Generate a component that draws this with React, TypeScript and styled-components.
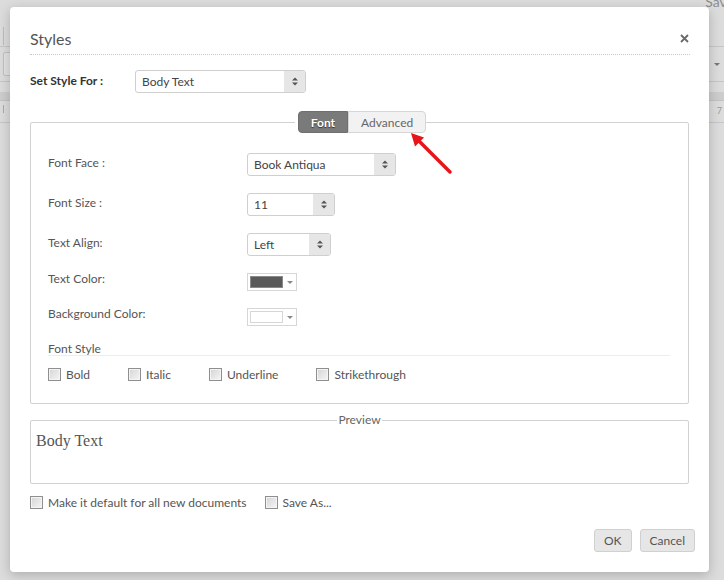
import styled, { createGlobalStyle } from "styled-components";

const GlobalStyle = createGlobalStyle`
  html, body {
    margin: 0;
    padding: 0;
  }
  body {
    font-family: Lato, "Liberation Sans", sans-serif;
    background: #dcdcdc;
  }
`;

const Screen = styled.div`
  position: relative;
  width: 724px;
  height: 580px;
  overflow: hidden;
  background: #dcdcdc;
`;

/* the editor behind the modal */
const AppShell = styled.div`
  display: flex;
  flex-direction: column;
`;

const AppHeader = styled.div`
  height: 47px;
  box-sizing: border-box;
  border-bottom: 1px solid #c6c6c6;
  display: flex;
  justify-content: space-between;
  align-items: flex-start;
  padding-left: 3px;
`;

const HeaderTool = styled.div`
  margin-top: 27px;
  width: 30px;
  height: 18px;
  border-left: 1px solid #bdbdbd;
`;

const SaveText = styled.span`
  margin-top: -7px;
  margin-right: -10px;
  font-size: 14px;
  color: #8c8c8c;
`;

const Toolbar = styled.div`
  height: 35px;
  box-sizing: border-box;
  border-bottom: 1px solid #c6c6c6;
  display: flex;
  align-items: center;
  justify-content: space-between;
  padding: 0 3px;
`;

const ToolBox = styled.div`
  width: 40px;
  height: 22px;
  border: 1px solid #c2c2c2;
  border-radius: 2px;
  background: #e2e2e2;
`;

const ToolRight = styled.div`
  display: flex;
  align-items: center;
  gap: 6px;
  padding-right: 1px;
  &::before {
    content: "";
    width: 1px;
    height: 17px;
    background: #bdbdbd;
  }
  &::after {
    content: "";
    border-left: 3px solid transparent;
    border-right: 3px solid transparent;
    border-top: 3px solid #777;
  }
`;

const Band = styled.div`
  margin-top: 10px;
  height: 8px;
  background: #cdcdcd;
  border-bottom: 1px solid #c2c2c2;
`;

const Ruler = styled.div`
  height: 22px;
  border-bottom: 1px solid #c6c6c6;
  display: flex;
  justify-content: space-between;
  padding: 4px 2px 0 3px;
  box-sizing: border-box;
  font-size: 9px;
  color: #999;
  &::before {
    content: "";
    width: 1px;
    height: 8px;
    background: #aaa;
  }
`;

/* modal */
const Dialog = styled.div`
  position: absolute;
  left: 10px;
  top: 7px;
  width: 699px;
  height: 565px;
  box-sizing: border-box;
  padding: 0 19px 0 20px;
  background: #fff;
  border-radius: 4px;
  box-shadow: 0 3px 12px rgba(0, 0, 0, 0.22);
  display: flex;
  flex-direction: column;
  color: #555;
  font-size: 12px;
`;

const Header = styled.div`
  display: flex;
  align-items: center;
  justify-content: space-between;
  padding: 22px 0 6px;
  border-bottom: 1px dotted #c8c8c8;
`;

const Title = styled.h1`
  margin: 0;
  font-size: 16px;
  line-height: 19px;
  font-weight: 400;
  color: #555;
`;

const CloseButton = styled.button`
  border: 0;
  background: none;
  padding: 0;
  margin-right: 1px;
  width: 9px;
  height: 9px;
  display: flex;
  cursor: pointer;
`;

const StyleForRow = styled.div`
  margin-top: 15px;
  display: flex;
  align-items: center;
`;

const StyleForLabel = styled.label`
  width: 105px;
  font-weight: 700;
  color: #333;
  margin-top: -2px;
`;

const SelectBox = styled.div<{ $w: number }>`
  width: ${(p) => p.$w}px;
  height: 23px;
  box-sizing: border-box;
  border: 1px solid #cfcfcf;
  border-radius: 3px;
  display: flex;
  align-items: stretch;
  overflow: hidden;
  background: #fff;
`;

const SelectValue = styled.span`
  flex: 1;
  display: flex;
  align-items: center;
  padding-left: 6px;
  color: #444;
`;

const SelectArrows = styled.span`
  width: 21px;
  background: #e6e6e6;
  display: flex;
  align-items: center;
  justify-content: center;
`;

const Group = styled.fieldset`
  margin: 18px 1px 0 0;
  padding: 0 18px 21px 17px;
  min-width: 0;
  border: 1px solid #d2d2d2;
  border-radius: 2px;
`;

const TabLegend = styled.legend`
  margin: 0 auto;
  padding: 0;
  display: flex;
  transform: translateX(3px);
`;

const Tab = styled.button<{ $active?: boolean }>`
  height: 22px;
  box-sizing: border-box;
  font-family: inherit;
  font-size: 12px;
  padding: 0 12px;
  border: 1px solid ${(p) => (p.$active ? "#6f6f6f" : "#d6d6d6")};
  background: ${(p) => (p.$active ? "#7a7a7a" : "#f2f2f2")};
  color: ${(p) => (p.$active ? "#fff" : "#666")};
  font-weight: ${(p) => (p.$active ? 700 : 400)};
  text-shadow: ${(p) => (p.$active ? "0 1px 1px #333" : "none")};
  border-radius: ${(p) => (p.$active ? "4px 0 0 4px" : "0 4px 4px 0")};
  cursor: pointer;
`;

const FormGrid = styled.div`
  margin-top: 20px;
  display: grid;
  grid-template-columns: 199px auto;
  row-gap: 17px;
  align-items: start;
`;

const FieldLabel = styled.label<{ $offset: number }>`
  color: #555;
  line-height: 15px;
  margin-top: ${(p) => p.$offset}px;
`;

const ColorPicker = styled.div`
  width: 50px;
  height: 18px;
  box-sizing: border-box;
  border: 1px solid #d6d6d6;
  display: flex;
  align-items: center;
  padding: 0 0 0 2px;
  gap: 3px;
`;

const Swatch = styled.span<{ $color: string }>`
  width: 33px;
  height: 12px;
  box-sizing: border-box;
  background: ${(p) => p.$color};
  border: 1px solid ${(p) => (p.$color === "#fff" ? "#d6d6d6" : "#8a8a8a")};
`;

const Caret = styled.span`
  border-left: 3px solid transparent;
  border-right: 3px solid transparent;
  border-top: 3px solid #8a8a8a;
  margin-left: 1px;
`;

const SectionTitle = styled.div`
  margin-top: 16px;
  line-height: 13px;
  border-bottom: 1px solid #ededed;
  color: #555;
`;

const CheckRow = styled.div<{ $gap: number }>`
  display: flex;
  align-items: center;
  gap: ${(p) => p.$gap}px;
`;

const StyleChecks = styled(CheckRow)`
  margin-top: 11px;
`;

const CheckItem = styled.label`
  display: flex;
  align-items: center;
  gap: 5px;
  color: #555;
  cursor: pointer;
`;

const CheckBox = styled.span`
  width: 13px;
  height: 13px;
  box-sizing: border-box;
  border: 1px solid #8f8f8f;
  background: linear-gradient(135deg, #d4d4d4, #f6f6f6);
  box-shadow: inset 0 0 0 1px #f4f4f4;
`;

const PreviewGroup = styled.fieldset`
  margin: 9px 1px 0 0;
  padding: 5px 5px 0;
  min-width: 0;
  height: 71px;
  box-sizing: border-box;
  border: 1px solid #d2d2d2;
  border-radius: 2px;
`;

const PreviewLegend = styled.legend`
  margin: 0 auto;
  padding: 0 1px;
  font-size: 12px;
  line-height: 14px;
  color: #666;
`;

const PreviewText = styled.div`
  font-family: "Liberation Serif", "DejaVu Serif", serif;
  font-size: 16px;
  color: #555;
`;

const OptionsRow = styled(CheckRow)`
  margin-top: 11px;
`;

const ButtonRow = styled.div`
  margin-top: 19px;
  margin-right: -5px;
  display: flex;
  justify-content: flex-end;
  gap: 8px;
`;

const Button = styled.button`
  height: 23px;
  box-sizing: border-box;
  padding: 0 9px;
  font-family: inherit;
  font-size: 12px;
  color: #555;
  background: #e6e6e6;
  border: 1px solid #d0d0d0;
  border-radius: 3px;
  cursor: pointer;
`;

const Pointer = styled.svg`
  position: absolute;
  left: 400px;
  top: 125px;
`;

const UpDown = () => (
  <svg width="6" height="9" viewBox="0 0 6 9">
    <path d="M0 3.5 L3 0.5 L6 3.5 Z M0 5.5 L3 8.5 L6 5.5 Z" fill="#555" />
  </svg>
);

const Select = ({ value, width }: { value: string; width: number }) => (
  <SelectBox $w={width}>
    <SelectValue>{value}</SelectValue>
    <SelectArrows>
      <UpDown />
    </SelectArrows>
  </SelectBox>
);

const Check = ({ label }: { label: string }) => (
  <CheckItem>
    <CheckBox />
    {label}
  </CheckItem>
);

const fields = [
  { label: "Font Face :", value: "Book Antiqua", width: 149 },
  { label: "Font Size :", value: "11", width: 88 },
  { label: "Text Align:", value: "Left", width: 84 },
];

const colors = [
  { label: "Text Color:", color: "#5a5a5a" },
  { label: "Background Color:", color: "#fff" },
];

const App = () => {
  return (
    <Screen>
      <GlobalStyle />
      <AppShell>
        <AppHeader>
          <HeaderTool />
          <SaveText>Save</SaveText>
        </AppHeader>
        <Toolbar>
          <ToolBox />
          <ToolRight />
        </Toolbar>
        <Band />
        <Ruler>7</Ruler>
      </AppShell>

      <Dialog>
        <Header>
          <Title>Styles</Title>
          <CloseButton aria-label="Close">
            <svg width="9" height="9" viewBox="0 0 9 9">
              <path d="M1 1 L8 8 M8 1 L1 8" stroke="#6a6a6a" strokeWidth="1.8" />
            </svg>
          </CloseButton>
        </Header>

        <StyleForRow>
          <StyleForLabel>Set Style For :</StyleForLabel>
          <Select value="Body Text" width={171} />
        </StyleForRow>

        <Group>
          <TabLegend>
            <Tab $active>Font</Tab>
            <Tab>Advanced</Tab>
          </TabLegend>
          <FormGrid>
            {fields.map((f) => [
              <FieldLabel key={f.label} $offset={2}>
                {f.label}
              </FieldLabel>,
              <Select key={f.value} value={f.value} width={f.width} />,
            ])}
            {colors.map((c) => [
              <FieldLabel key={c.label} $offset={-2}>
                {c.label}
              </FieldLabel>,
              <ColorPicker key={c.color}>
                <Swatch $color={c.color} />
                <Caret />
              </ColorPicker>,
            ])}
          </FormGrid>
          <SectionTitle>Font Style</SectionTitle>
          <StyleChecks $gap={38}>
            <Check label="Bold" />
            <Check label="Italic" />
            <Check label="Underline" />
            <Check label="Strikethrough" />
          </StyleChecks>
        </Group>

        <PreviewGroup>
          <PreviewLegend>Preview</PreviewLegend>
          <PreviewText>Body Text</PreviewText>
        </PreviewGroup>

        <OptionsRow $gap={18}>
          <Check label="Make it default for all new documents" />
          <Check label="Save As..." />
        </OptionsRow>

        <ButtonRow>
          <Button>OK</Button>
          <Button>Cancel</Button>
        </ButtonRow>
      </Dialog>

      <Pointer width="60" height="55" viewBox="400 125 60 55">
        <line x1="450" y1="172" x2="418" y2="140" stroke="#e8141a" strokeWidth="3.5" strokeLinecap="round" />
        <polygon points="411,133 424,137.5 415,146.5" fill="#e8141a" />
      </Pointer>
    </Screen>
  );
};

export default App;
